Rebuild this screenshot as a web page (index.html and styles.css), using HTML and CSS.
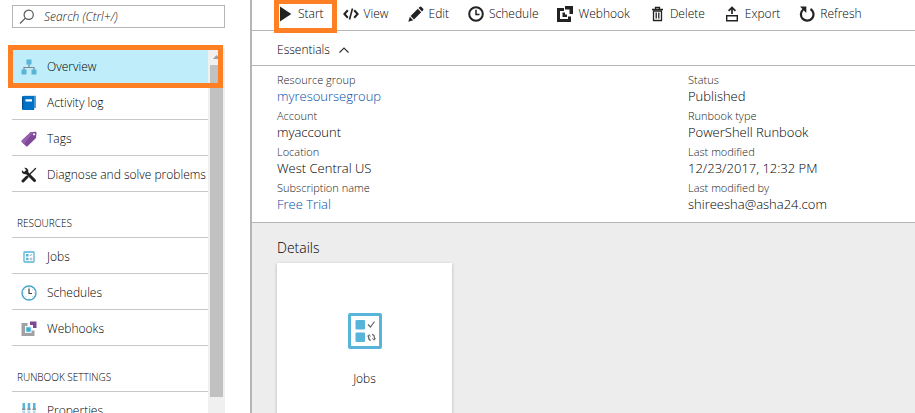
FILE: index.html
```html
<!DOCTYPE html>
<html lang="en">
<head>
<meta charset="utf-8">
<title>Runbook overview</title>
<link rel="stylesheet" href="styles.css">
</head>
<body>
<div class="app">
  <aside class="sidebar">
    <div class="search">
      <svg class="search-icon" width="16" height="16" viewBox="0 0 16 16" fill="none" stroke="#555" stroke-width="1.2"><circle cx="9.7" cy="5.8" r="4.6"/><path d="M6.4 9.1 1 14.5"/></svg>
      <input type="text" aria-label="Search" placeholder="Search (Ctrl+/)">
    </div>
    <div class="menu">
      <nav class="menu-list">
        <a class="item active" href="#overview">
          <svg width="16" height="16" viewBox="0 0 16 16"><path d="M8 5v4M3 11V8.500h10V11" fill="none" stroke="#7a8a91" stroke-width="1.200"/><path d="M5.500.500h5v5h-5zM.500 10.500h5v5h-5zM10.500 10.500h5v5h-5z" fill="#59b4d9"/></svg>
          Overview
        </a>
        <a class="item" href="#activity">
          <svg width="16" height="16" viewBox="0 0 16 16"><path d="M2.500.8H15V13H3z" fill="#5aa2dc"/><path d="M1 1.500Q1 1 2 1h11.200v14H2.200Q1 15 1 14z" fill="#0072c6"/><path d="M1 2h1.200v12H1z" fill="#004f8c"/><path d="M4.500 4.300H11v2.200H4.500z" fill="#fff"/></svg>
          Activity log
        </a>
        <a class="item" href="#tags">
          <svg width="16" height="16" viewBox="0 0 16 16"><path d="M9.500 1.300 14.500.8q1 0 1 1L15 7l-8.500 8.200q-.7.600-1.400 0L.800 11q-.6-.7 0-1.400z" fill="#804998"/><path d="M9.500 1.300.8 9.600q-.6.700 0 1.400L3 13.200 12.500 1z" fill="#955fad"/><circle cx="13" cy="3.300" r="1.100" fill="#fff"/></svg>
          Tags
        </a>
        <a class="item" href="#diagnose">
          <svg width="16" height="16" viewBox="0 0 16 16" fill="none" stroke="#222" stroke-linecap="round"><path d="M5 5l8.500 8.500" stroke-width="3"/><path d="M1 3.200 3.300 5.200 5.400 3.300 3.200.800Q6 .2 7.200 3q.4 1.500-.4 2.800L5 7.300Q3 7.500 1.500 6.200.4 5 1 3.200z" fill="#222" stroke="none"/><path d="M14.500 1.500 8 8" stroke-width="1.300"/><path d="M6 10l-4 4" stroke-width="3"/></svg>
          Diagnose and solve problems
        </a>
        <h2 class="group">RESOURCES</h2>
        <a class="item" href="#jobs">
          <svg width="16" height="16" viewBox="0 0 16 16"><rect x="3" y="3" width="10" height="10" rx=".5" fill="#fff" stroke="#59b4d9" stroke-width="1.300"/><path d="M5 5h2.500v2.500H5zM5 8.800h2.500v2.500H5z" fill="#59b4d9"/><path d="m8.800 6 .8.900 1.500-1.900" fill="none" stroke="#777" stroke-width=".6"/><circle cx="10" cy="10" r="1" fill="none" stroke="#888" stroke-width=".6"/></svg>
          Jobs
        </a>
        <a class="item" href="#schedules">
          <svg width="16" height="16" viewBox="0 0 16 16" fill="none"><circle cx="8" cy="8" r="7" fill="#fff" stroke="#45a5cc" stroke-width="1.400"/><path d="M8 2.200v1M8 12.800v1M2.200 8h1M12.800 8h1M4 4l.6.600M12 4l-.6.600M4 12l.6-.6M12 12l-.6-.6" stroke="#9aa" stroke-width=".7"/><path d="M8 3.500V8.500h3" stroke="#444" stroke-width="1.200"/></svg>
          Schedules
        </a>
        <a class="item" href="#webhooks">
          <svg width="16" height="16" viewBox="0 0 16 16"><path d="M.5 2H6.500v3H4v7h6.500v-2.500h3V15H.5z" fill="#a0a1a2"/><path d="M9 .5h6.500V7H12V4H9z" fill="#804998"/><path d="M5 6h5v5H5z" fill="#3fa9d4" stroke="#bfe3f1" stroke-width=".8"/></svg>
          Webhooks
        </a>
        <h2 class="group">RUNBOOK SETTINGS</h2>
        <a class="item" href="#properties">
          <svg width="16" height="16" viewBox="0 0 16 16"><path d="M1.500 0h2.500v6H1.500zM6.700 0h2.500v6H6.700zM12 0h2.500v6H12z" fill="#59b4d9"/><path d="M1.500 7.500h2.500V15H1.500zM6.700 7.500h2.500V15H6.700zM12 7.500h2.500V15H12z" fill="#a9d8ea"/><path d="M1 5.500h3.500v1.500H1zM6.200 5.500h3.500v1.500H6.200zM11.500 5.500H15v1.500h-3.500z" fill="#8a9499"/></svg>
          Properties
        </a>
      </nav>
      <div class="scrollbar">
        <svg class="scroll-arrow" width="17" height="17" viewBox="0 0 17 17"><path d="M5 11 8.500 7 12 11z" fill="#a0a0a0"/></svg>
        <div class="scroll-thumb"></div>
      </div>
      <div class="highlight menu-highlight"></div>
    </div>
  </aside>
  <main class="blade">
    <div class="toolbar">
      <button class="tool" type="button">
        <svg width="16" height="16" viewBox="0 0 16 16"><path d="M3 .5 14.300 8 3 15.500z" fill="#222"/></svg>
        Start
        <span class="highlight tool-highlight"></span>
      </button>
      <button class="tool" type="button">
        <svg width="16" height="16" viewBox="0 0 16 16" fill="none" stroke="#222" stroke-width="2"><path d="M4.800 4.300 1.400 8l3.400 3.700M11.200 4.300 14.600 8l-3.400 3.700"/><path d="M9.500 2.500l-3 11" stroke-width="1.600"/></svg>
        View
      </button>
      <button class="tool" type="button">
        <svg width="16" height="16" viewBox="0 0 16 16" fill="#222"><path d="M.3 15.700 1.800 10.800 5.200 14.200zM2.600 10 9.800 2.800 13.200 6.200 6 13.400zM10.600 2l1.200-1.200q.7-.6 1.400 0l2 2q.6.700 0 1.400L14 5.400z"/></svg>
        Edit
      </button>
      <button class="tool" type="button">
        <svg width="16" height="16" viewBox="0 0 16 16" fill="none" stroke="#222"><circle cx="8" cy="8" r="6.800" stroke-width="2"/><path d="M8 3.800V8.500h3.500" stroke-width="1.500"/></svg>
        Schedule
      </button>
      <button class="tool" type="button">
        <svg width="16" height="16" viewBox="0 0 16 16" fill="#222"><path d="M0 2h7v3H3v8h8v-2.500h3V16H0z"/><path d="M8 0h8v8h-3.500V3.500H8z"/><path d="M5.500 6.500H8v2h2v2.500H5.500z"/></svg>
        Webhook
      </button>
      <button class="tool" type="button">
        <svg width="16" height="16" viewBox="0 0 16 16" fill="none" stroke="#222"><path d="M3 3.500h11M6.500 3V1.500h4V3" stroke-width="1.300"/><path d="M4.500 5v9.500h8V5zM7.200 6.500v6M9.800 6.500v6" stroke-width="1.300"/></svg>
        Delete
      </button>
      <button class="tool" type="button">
        <svg width="16" height="16" viewBox="0 0 16 16" fill="none" stroke="#222" stroke-width="1.400"><path d="M2.700 9.700h10.600v5H2.700z"/><path d="M8 8V1.500M4.600 4.800 8 1.400l3.400 3.400" stroke-width="1.700"/></svg>
        Export
      </button>
      <button class="tool" type="button">
        <svg width="16" height="16" viewBox="0 0 16 16" fill="none" stroke="#222" stroke-width="2.200"><path d="M11.500 3A6.300 6.300 0 1 1 4.200 3.500"/><path d="M1 .5h6.300V7z" fill="#222" stroke="none"/></svg>
        Refresh
      </button>
    </div>
    <button class="essentials-toggle" type="button">
      Essentials
      <svg width="12" height="8" viewBox="0 0 12 8" fill="none" stroke="#333" stroke-width="1.200"><path d="M1.500 6.500 6 2l4.500 4.500"/></svg>
    </button>
    <section class="essentials">
      <dl>
        <dt>Resource group</dt><dd><a href="#group">myresoursegroup</a></dd>
        <dt>Account</dt><dd>myaccount</dd>
        <dt>Location</dt><dd>West Central US</dd>
        <dt>Subscription name</dt><dd><a href="#subscription">Free Trial</a></dd>
      </dl>
      <dl>
        <dt>Status</dt><dd>Published</dd>
        <dt>Runbook type</dt><dd>PowerShell Runbook</dd>
        <dt>Last modified</dt><dd>12/23/2017, 12:32 PM</dd>
        <dt>Last modified by</dt><dd>shireesha@asha24.com</dd>
      </dl>
    </section>
    <section class="details">
      <h2>Details</h2>
      <a class="tile" href="#jobs">
        <svg width="34" height="36" viewBox="0 0 34 36"><rect x="1.500" y="1.500" width="31" height="33" rx=".5" fill="#fff" stroke="#59b4d9" stroke-width="3"/><rect x="7.500" y="7" width="9.500" height="9.500" rx="1" fill="#59b4d9"/><rect x="7.500" y="19.500" width="9.500" height="9.500" rx="1" fill="#59b4d9"/><g fill="none" stroke="#666" stroke-width="1.200"><path d="m20 11.500 2.500 2.500 4-5.500"/><path d="M22.800 27.500Q20 26.500 20.700 22.500M24 21.300Q27 22 26.300 26.300"/><path d="M19.300 23.500 20.900 21.700 22.700 23.300M24.300 25.500 26.100 27.200 27.800 25.300" stroke-width="1"/></g></svg>
        <span>Jobs</span>
      </a>
    </section>
  </main>
</div>
</body>
</html>
```
FILE: styles.css
```css
* { box-sizing: border-box; }
body {
  margin: 0;
  font-family: "Open Sans", "Noto Sans", sans-serif;
  font-size: 12px;
  font-weight: 300;
  color: #000;
  background: #fff;
}
a { color: inherit; text-decoration: none; }
button { font: inherit; color: inherit; background: none; border: 0; padding: 0; }
svg { flex: none; display: block; }
h2, dl, dd { margin: 0; font-weight: inherit; }

.app { display: flex; height: 100vh; overflow: hidden; }

.sidebar {
  flex: none;
  width: 252px;
  padding: 5px 25px 0 12px;
  border-right: 2px solid #b5b5b5;
  display: flex;
  flex-direction: column;
  gap: 20px;
}
.search {
  flex: none;
  height: 23px;
  display: flex;
  align-items: center;
  gap: 9px;
  padding-left: 6px;
  border: 1px solid #b5b5b5;
}
.search input {
  flex: 1;
  min-width: 0;
  border: 0;
  padding: 0;
  outline: 0;
  background: none;
  font: inherit;
  font-style: italic;
}
.search input::placeholder { color: #222; opacity: 1; }

.menu { position: relative; flex: 1; min-height: 0; display: flex; }
.menu-list { flex: 1; min-width: 0; overflow: hidden; }
.item {
  height: 36px;
  display: flex;
  align-items: center;
  gap: 10px;
  padding: 2px 0 0 9px;
  border-bottom: 1px solid #c8c8c8;
  white-space: nowrap;
}
.item.active { background: #bfeefa; border-color: #bfeefa; }
.group {
  height: 46px;
  padding: 22px 0 0 5px;
  border-bottom: 1px solid #c8c8c8;
  font-size: 10px;
  line-height: 18px;
}
.scrollbar { flex: none; width: 17px; background: #f0f0f0; }
.scroll-thumb { height: 91%; margin: 0 2px; background: #c1c1c1; }

.highlight { position: absolute; border: 5px solid #ff8024; pointer-events: none; }
.menu-highlight { top: -3px; left: -4px; right: 2px; height: 43px; }
.tool-highlight { top: -1px; left: -3px; right: -13px; height: 34px; }

.blade { flex: 1; min-width: 0; display: flex; flex-direction: column; }
.toolbar {
  flex: none;
  height: 31px;
  display: flex;
  gap: 19px;
  padding: 0 25px 3px;
  border-bottom: 1px solid #b5b5b5;
}
.tool { position: relative; display: flex; align-items: center; gap: 5px; white-space: nowrap; }
.essentials-toggle {
  flex: none;
  height: 35px;
  display: flex;
  align-items: center;
  gap: 8px;
  padding: 3px 25px 0;
  border-bottom: 1px solid #b5b5b5;
}
.essentials {
  flex: none;
  display: grid;
  grid-template-columns: 411px 1fr;
  padding: 7px 25px 5px;
  border-bottom: 1px solid #b5b5b5;
}
.essentials dt { font-size: 11px; line-height: 14px; color: #222; }
.essentials dd { font-size: 13px; line-height: 18px; margin-bottom: 4px; }
.essentials a { color: #004ca8; }

.details { flex: 1; padding: 15px 25px 0; background: #ededed; }
.details h2 { font-size: 14px; line-height: 20px; margin-bottom: 5px; }
.tile {
  width: 175px;
  height: 175px;
  display: flex;
  flex-direction: column;
  align-items: center;
  gap: 21px;
  padding-top: 50px;
  background: #fff;
  box-shadow: 0 1px 3px rgba(0, 0, 0, .25);
}
.tile span { line-height: 18px; }
```
